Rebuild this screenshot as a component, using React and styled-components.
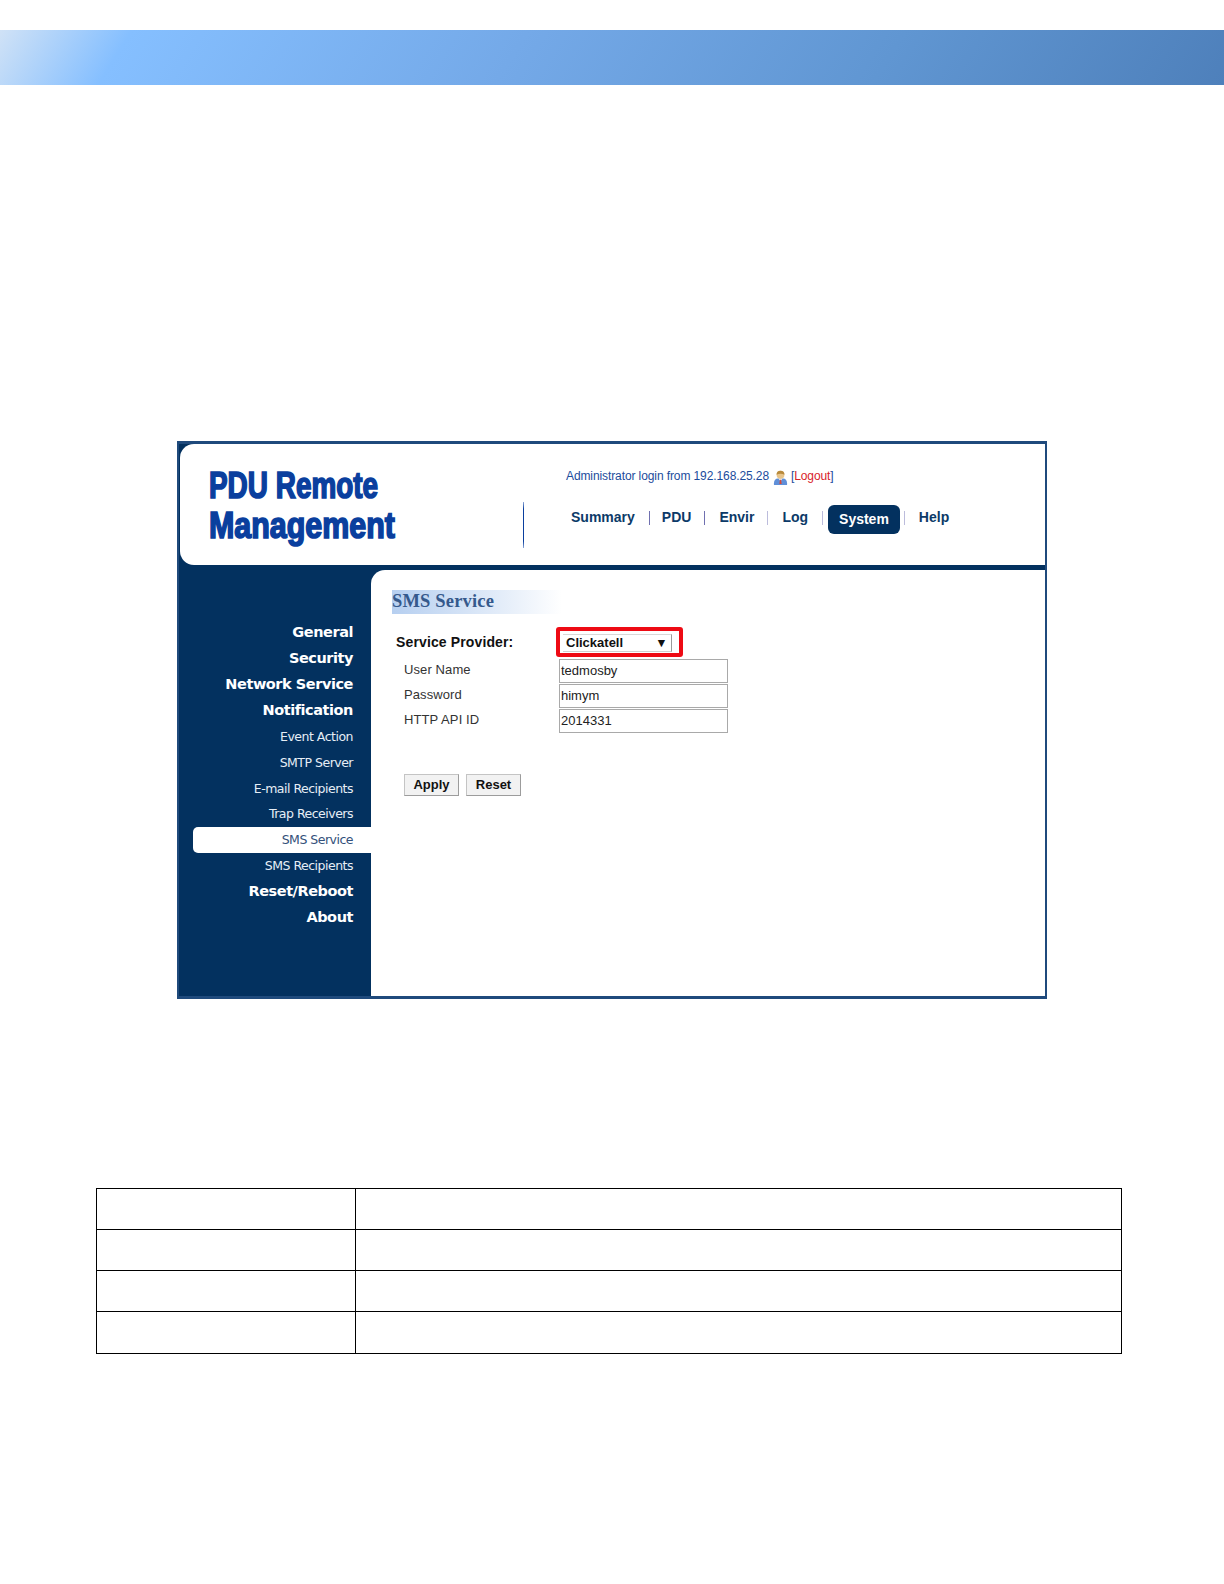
import React from "react";
import styled, { createGlobalStyle } from "styled-components";

const Global = createGlobalStyle`
  html, body { margin: 0; padding: 0; background: #fff; }
  body { font-family: "Liberation Sans", Arial, sans-serif; }
`;

const Page = styled.div`
  width: 1224px;
  height: 1584px;
  padding-top: 30px;
  box-sizing: border-box;
  overflow: hidden;
`;

const Band = styled.div`
  height: 55px;
  background: linear-gradient(122deg, #d0e2f6 0%, #85bfff 10.5%, #74a9e8 42%, #6096d2 72%, #4e80bb 100%);
`;

const Frame = styled.div`
  width: 870px;
  height: 558px;
  margin: 356px 0 0 177px;
  box-sizing: border-box;
  background: #03315f;
  border: 3px solid #1f4a7c;
  border-right-width: 2px;
  border-left-width: 2px;
  display: flex;
  flex-direction: column;
`;

const Header = styled.header`
  height: 121px;
  flex: none;
  margin-left: 1px;
  background: #fff;
  border-radius: 14px 0 0 14px;
  display: flex;
`;

const Logo = styled.div`
  width: 343px;
  flex: none;
  box-sizing: border-box;
  padding: 22px 0 0 29px;
`;

const LogoLine = styled.div`
  font-weight: 700;
  font-size: 36.5px;
  line-height: 39.5px;
  color: #0a3f9e;
  -webkit-text-stroke: 1.7px #0a3f9e;
  white-space: nowrap;
  transform: scaleX(${(p) => p.$sx});
  transform-origin: left center;
`;

const Divider = styled.div`
  width: 1px;
  height: 46px;
  margin-top: 58px;
  flex: none;
  background: linear-gradient(180deg, #8fa8d8, #0a3f9e 15%, #0a3f9e 85%, #8fa8d8);
`;

const HeaderRight = styled.div`
  flex: 1;
  padding: 24px 0 0 42px;
`;

const LoginLine = styled.div`
  display: flex;
  align-items: center;
  height: 16px;
  font-size: 12px;
  letter-spacing: -0.1px;
  color: #1c4c9c;
  white-space: nowrap;
`;

const UserIcon = styled.svg`
  width: 15px;
  height: 15px;
  margin: 2px 3px 0 4px;
  flex: none;
`;

const Logout = styled.span`
  color: #d8232a;
`;

const Nav = styled.nav`
  display: flex;
  align-items: flex-start;
  margin: 23px 0 0 5px;
`;

const NavLink = styled.a`
  font-size: 14px;
  font-weight: 700;
  line-height: 20px;
  color: #0c3a68;
  white-space: nowrap;
  ${(p) => p.$active && `
    background: #03315f;
    color: #fff;
    border-radius: 6px;
    height: 29px;
    line-height: 29px;
    padding: 0 11px;
    box-sizing: border-box;
    margin: -2px 0 0;
  `}
`;

const Sep = styled.span`
  width: 1px;
  height: 14px;
  margin: 4px ${(p) => p.$r}px 0 ${(p) => p.$l}px;
  flex: none;
  background: ${(p) => p.$light ? "#bcbcdc" : "#7070b0"};
`;

const Body = styled.div`
  flex: 1;
  display: flex;
  min-height: 0;
`;

const Sidebar = styled.aside`
  width: 192px;
  flex: none;
  padding-top: 55.2px;
  box-sizing: border-box;
`;

const SideItem = styled.div`
  height: 25.9px;
  line-height: 25.9px;
  text-align: right;
  padding-right: 18px;
  white-space: nowrap;
  font-family: "DejaVu Sans", sans-serif;
  color: #fff;
  ${(p) => p.$main
    ? `font-weight: 700; font-size: 14.5px; letter-spacing: -0.45px;`
    : `font-size: 12.5px; letter-spacing: -0.5px; color: #e6eef6;`}
  ${(p) => p.$active && `
    background: #fff;
    color: #33507a;
    margin-left: 14px;
    border-radius: 5px 0 0 5px;
  `}
`;

const Panel = styled.main`
  flex: 1;
  margin-top: 5px;
  background: #fff;
  border-radius: 14px 0 0 0;
  padding: 20px 0 0 21px;
`;

const Title = styled.h2`
  margin: 0;
  width: 170px;
  height: 24px;
  line-height: 23px;
  font-family: "Liberation Serif", serif;
  font-size: 18.5px;
  font-weight: 700;
  letter-spacing: 0.17px;
  color: #35598c;
  background: linear-gradient(90deg, #b6cff0 0%, #e4edf9 65%, #fff 100%);
  white-space: nowrap;
`;

const ProviderRow = styled.div`
  display: flex;
  align-items: center;
  margin: 13px 0 2px;
`;

const ProviderLabel = styled.label`
  width: 164px;
  flex: none;
  box-sizing: border-box;
  padding: 0 0 0 4px;
  font-size: 14px;
  font-weight: 700;
  color: #111;
  letter-spacing: 0.13px;
`;

const Highlight = styled.div`
  width: 127px;
  height: 30px;
  box-sizing: border-box;
  border: 4px solid #ee0a14;
  border-radius: 3px;
  padding: 3px 0 0 3px;
`;

const FakeSelect = styled.div`
  width: 109px;
  height: 18px;
  box-sizing: border-box;
  border-right: 1px solid #9a9a9a;
  border-bottom: 1px solid #d0d0d0;
  border-top: 1px solid #d8d8d8;
  display: flex;
  align-items: center;
  justify-content: space-between;
  padding: 0 6px 1px 3px;
  font-size: 13px;
  font-weight: 700;
  color: #111;
`;

const Arrow = styled.span`
  font-family: "DejaVu Sans", sans-serif;
  font-size: 9.5px;
  font-weight: 400;
`;

const Field = styled.div`
  display: flex;
  height: 25px;
`;

const FieldLabel = styled.label`
  width: 167px;
  flex: none;
  box-sizing: border-box;
  padding-left: 12px;
  line-height: 22px;
  font-size: 13px;
  color: #333;
  letter-spacing: 0.1px;
`;

const TextBox = styled.div`
  width: 169px;
  height: 24px;
  box-sizing: border-box;
  border: 1px solid #a9a9a9;
  padding-left: 1px;
  line-height: 21px;
  font-size: 13px;
  color: #222;
`;

const Buttons = styled.div`
  display: flex;
  gap: 7px;
  margin: 40px 0 0 12px;
`;

const Button = styled.div`
  width: 55px;
  height: 22px;
  box-sizing: border-box;
  text-align: center;
  line-height: 19px;
  font-size: 13px;
  font-weight: 700;
  color: #111;
  background: #f2f2f2;
  border: 1px solid #c4c4c4;
  border-right-color: #9c9c9c;
  border-bottom-color: #9c9c9c;
`;

const Table = styled.table`
  width: 1026px;
  margin: 189px 0 0 96px;
  border-collapse: collapse;
  table-layout: fixed;
  & td { border: 1.5px solid #000; padding: 0; height: 40px; }
  & tr:last-child td { height: 41px; }
  & td:first-child { width: 258px; }
`;

const sideItems = [
  ["General", 1], ["Security", 1], ["Network Service", 1], ["Notification", 1],
  ["Event Action"], ["SMTP Server"], ["E-mail Recipients"], ["Trap Receivers"],
  ["SMS Service", 0, 1], ["SMS Recipients"], ["Reset/Reboot", 1], ["About", 1],
];

export default function App() {
  return (
    <Page>
      <Global />
      <Band />
      <Frame>
        <Header>
          <Logo>
            <LogoLine $sx={0.765}>PDU Remote</LogoLine>
            <LogoLine $sx={0.833}>Management</LogoLine>
          </Logo>
          <Divider />
          <HeaderRight>
            <LoginLine>
              Administrator login from 192.168.25.28
              <UserIcon viewBox="0 0 16 16">
                <path d="M1 16v-2c0-3 2-5 4-5h6c2 0 4 2 4 5v2z" fill="#5f8fd8" />
                <path d="M6 9h4l-1 2H7z" fill="#f4f4f4" />
                <path d="M7.3 10.5h1.4L9.2 15H6.8z" fill="#d8483a" />
                <circle cx="8" cy="5" r="4.2" fill="#e8c48a" />
                <path d="M3.8 5A4.2 4.2 0 0 1 12.2 5C10 3.6 6 3.6 3.8 5z" fill="#b88a3c" />
              </UserIcon>
              [<Logout>Logout</Logout>]
            </LoginLine>
            <Nav>
              <NavLink>Summary</NavLink>
              <Sep $l={14} $r={12} />
              <NavLink>PDU</NavLink>
              <Sep $l={13} $r={14} />
              <NavLink>Envir</NavLink>
              <Sep $l={13} $r={14} $light />
              <NavLink>Log</NavLink>
              <Sep $l={14} $r={5} $light />
              <NavLink $active>System</NavLink>
              <Sep $l={4} $r={14} $light />
              <NavLink>Help</NavLink>
            </Nav>
          </HeaderRight>
        </Header>
        <Body>
          <Sidebar>
            {sideItems.map(([t, main, active]) => (
              <SideItem key={t} $main={!!main} $active={!!active}>{t}</SideItem>
            ))}
          </Sidebar>
          <Panel>
            <Title>SMS Service</Title>
            <ProviderRow>
              <ProviderLabel>Service Provider:</ProviderLabel>
              <Highlight>
                <FakeSelect>Clickatell<Arrow>▼</Arrow></FakeSelect>
              </Highlight>
            </ProviderRow>
            <Field><FieldLabel>User Name</FieldLabel><TextBox>tedmosby</TextBox></Field>
            <Field><FieldLabel>Password</FieldLabel><TextBox>himym</TextBox></Field>
            <Field><FieldLabel>HTTP API ID</FieldLabel><TextBox>2014331</TextBox></Field>
            <Buttons>
              <Button>Apply</Button>
              <Button>Reset</Button>
            </Buttons>
          </Panel>
        </Body>
      </Frame>
      <Table>
        <tbody>
          {[0, 1, 2, 3].map((r) => (
            <tr key={r}><td /><td /></tr>
          ))}
        </tbody>
      </Table>
    </Page>
  );
}
